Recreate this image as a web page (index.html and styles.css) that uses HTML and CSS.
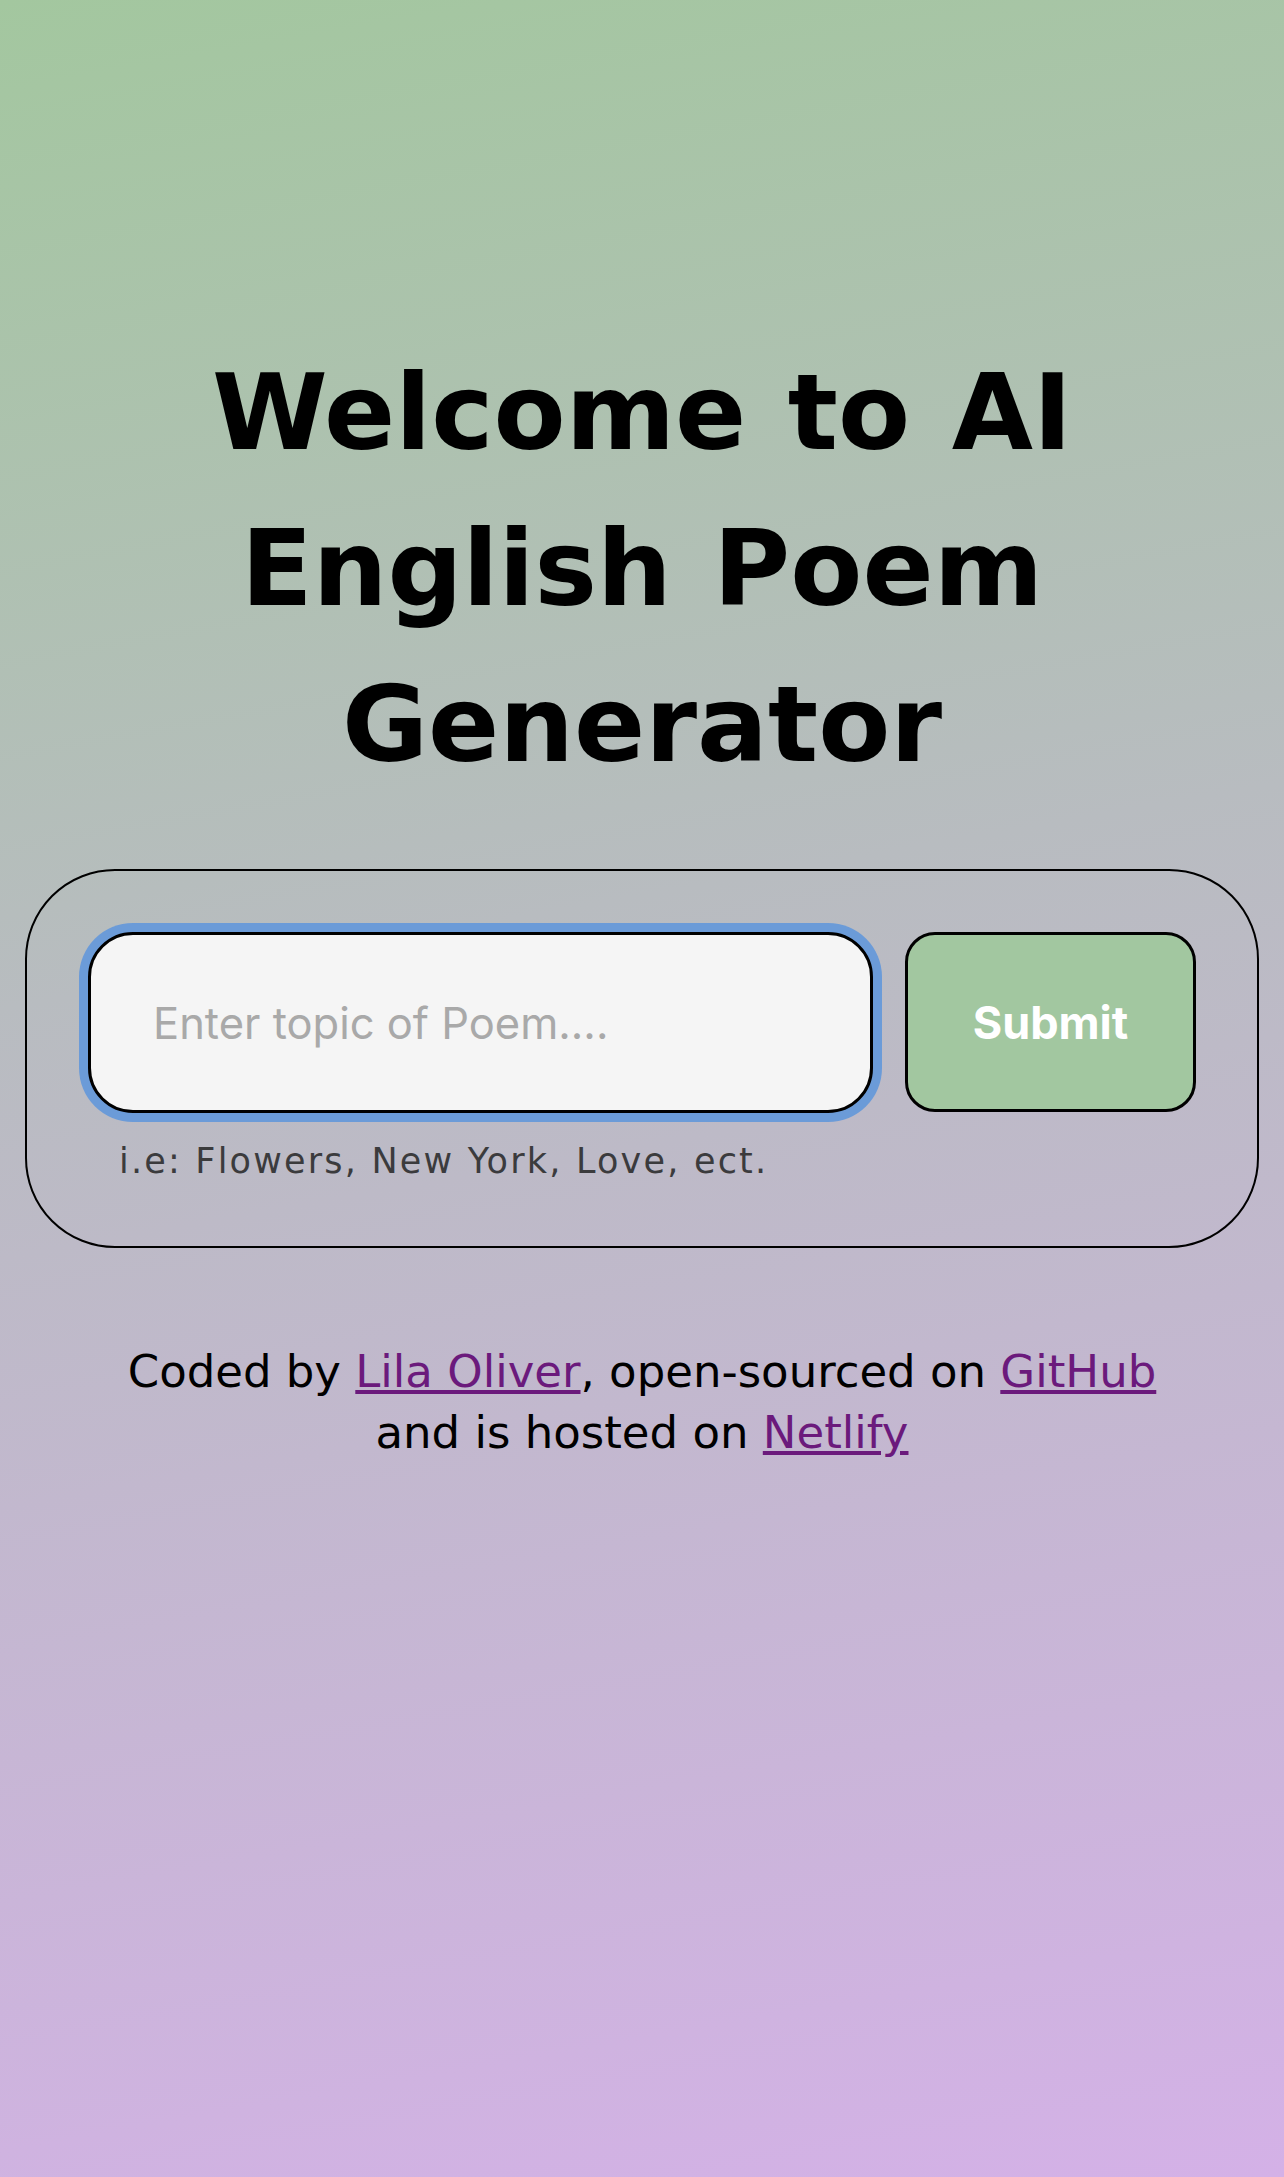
FILE: index.html
```html
<!DOCTYPE html>
<html lang="en">
<head>
<meta charset="utf-8">
<title>AI English Poem Generator</title>
<link rel="stylesheet" href="styles.css">
</head>
<body>
<div class="page">
  <h1 class="title">Welcome to AI English Poem Generator</h1>
  <div class="card">
    <form class="form-row">
      <input class="topic" type="text" placeholder="Enter topic of Poem....">
      <button class="submit" type="button">Submit</button>
    </form>
    <div class="hint">i.e: Flowers, New York, Love, ect.</div>
  </div>
  <footer class="footer">
    Coded by <a class="link" href="#">Lila Oliver</a>, open-sourced on <a class="link" href="#">GitHub</a><br>
    and is hosted on <a class="link" href="#">Netlify</a>
  </footer>
</div>
</body>
</html>
```

FILE: styles.css
```css
html, body {
  margin: 0;
  padding: 0;
}
body {
  min-height: 2177px;
  background: linear-gradient(170deg, #a3c79f 0%, #b8bcc0 42%, #d4b1e7 100%);
  font-family: "DejaVu Sans", Verdana, sans-serif;
  color: #000;
}
.page {
  padding: 335px 25px 0;
}
.title {
  margin: 0;
  font-family: "DejaVu Sans", Verdana, sans-serif;
  font-weight: bold;
  font-size: 105px;
  line-height: 156px;
  word-spacing: 5px;
  text-align: center;
}
.card {
  margin-top: 66px;
  border: 2px solid #000;
  border-radius: 90px;
  padding: 61px 61px 65px;
}
.form-row {
  display: flex;
  gap: 32px;
  margin: 0;
}
.topic {
  box-sizing: border-box;
  width: 785px;
  height: 181px;
  margin: 0;
  border: 3px solid #000;
  border-radius: 45px;
  background: #f5f5f5;
  box-shadow: 0 0 0 9px #6b9bd8;
  padding: 0 0 0 62px;
  font-family: Inter, "Noto Sans", sans-serif;
  font-size: 43.5px;
  color: #000;
  outline: none;
}
.topic::placeholder {
  color: #a9a9a9;
}
.submit {
  box-sizing: border-box;
  width: 291px;
  height: 180px;
  margin: 0;
  border: 3px solid #000;
  border-radius: 30px;
  background: #a2c7a0;
  color: #fff;
  font-family: Inter, "Noto Sans", sans-serif;
  font-weight: 700;
  font-size: 45px;
  padding: 0;
}
.hint {
  margin-top: 28px;
  padding-left: 31px;
  font-size: 35px;
  letter-spacing: 2.2px;
  color: #3b3b3d;
}
.footer {
  margin-top: 93px;
  text-align: center;
  font-size: 45px;
  line-height: 61px;
}
.link {
  color: #6b1a7c;
  text-decoration: underline;
}
```
